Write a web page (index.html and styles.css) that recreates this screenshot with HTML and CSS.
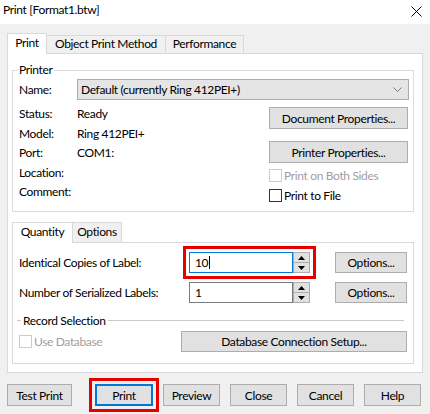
FILE: index.html
```html
<!DOCTYPE html>
<html lang="en">
<head>
<meta charset="utf-8">
<title>Print [Format1.btw]</title>
<link rel="stylesheet" href="styles.css">
</head>
<body>
<div class="window">
  <div class="titlebar">
    <span class="title">Print [Format1.btw]</span>
    <span class="close" aria-label="Close">
      <svg width="11" height="11" viewBox="0 0 11 11"><path d="M0.5 0.5 L10.5 10.5 M10.5 0.5 L0.5 10.5" stroke="#000" stroke-width="1" fill="none"/></svg>
    </span>
  </div>
  <div class="dialog">
    <div class="tabs">
      <div class="tab active tab-print">Print</div>
      <div class="tab tab-opm">Object Print Method</div>
      <div class="tab tab-perf">Performance</div>
    </div>
    <div class="panel">
      <fieldset class="group">
        <legend>Printer</legend>
        <div class="name-row">
          <span class="lbl">Name:</span>
          <div class="combo">
            <span>Default (currently Ring 412PEI+)</span>
            <svg width="9" height="5" viewBox="0 0 9 5"><path d="M0.5 0.5 L4.5 4.5 L8.5 0.5" stroke="#777" stroke-width="1" fill="none"/></svg>
          </div>
        </div>
        <div class="printer-body">
          <div class="info">
            <span>Status:</span><span>Ready</span>
            <span>Model:</span><span>Ring 412PEI+</span>
            <span>Port:</span><span>COM1:</span>
            <span>Location:</span><span></span>
            <span>Comment:</span><span></span>
          </div>
          <div class="actions">
            <button class="btn">Document Properties...</button>
            <button class="btn">Printer Properties...</button>
            <label class="check disabled first"><span class="box"></span>Print on Both Sides</label>
            <label class="check"><span class="box"></span>Print to File</label>
          </div>
        </div>
      </fieldset>

      <div class="subtabs">
        <div class="tab active tab-qty">Quantity</div>
        <div class="tab tab-opt">Options</div>
      </div>
      <div class="subpanel">
        <div class="qgrid">
          <span class="qlbl">Identical Copies of Label:</span>
          <div class="spin highlight">
            <div class="field focused">10<span class="caret"></span></div>
            <div class="spinbtns">
              <span class="sb"><svg width="7" height="4" viewBox="0 0 7 4"><path d="M0 4 L3.5 0 L7 4 Z" fill="#000"/></svg></span>
              <span class="sb"><svg width="7" height="4" viewBox="0 0 7 4"><path d="M0 0 L3.5 4 L7 0 Z" fill="#000"/></svg></span>
            </div>
          </div>
          <button class="btn opt">Options...</button>

          <span class="qlbl">Number of Serialized Labels:</span>
          <div class="spin">
            <div class="field">1</div>
            <div class="spinbtns">
              <span class="sb"><svg width="7" height="4" viewBox="0 0 7 4"><path d="M0 4 L3.5 0 L7 4 Z" fill="#000"/></svg></span>
              <span class="sb"><svg width="7" height="4" viewBox="0 0 7 4"><path d="M0 0 L3.5 4 L7 0 Z" fill="#000"/></svg></span>
            </div>
          </div>
          <button class="btn opt">Options...</button>
        </div>
        <div class="record">
          <span class="rule short"></span>
          <span class="record-title">Record Selection</span>
          <span class="rule long"></span>
        </div>
        <div class="db-row">
          <label class="check disabled"><span class="box"></span>Use Database</label>
          <button class="btn db">Database Connection Setup...</button>
        </div>
      </div>
    </div>

    <div class="buttons">
      <button class="btn bb test">Test Print</button>
      <button class="btn bb default highlight">Print</button>
      <button class="btn bb">Preview</button>
      <button class="btn bb">Close</button>
      <button class="btn bb">Cancel</button>
      <button class="btn bb">Help</button>
    </div>
  </div>
</div>
</body>
</html>
```
FILE: styles.css
```css
* { box-sizing: border-box; }
html, body { margin: 0; padding: 0; }
body {
  width: 430px;
  height: 414px;
  overflow: hidden;
  background: #f0f0f0;
  font-family: Lato, "Noto Sans", sans-serif;
  font-size: 12px;
  letter-spacing: -0.35px;
  color: #000;
}

.titlebar {
  height: 24px;
  background: #fff;
  display: flex;
  justify-content: space-between;
  align-items: flex-start;
}
.title { padding: 2px 0 0 3px; line-height: 16px; }
.close { display: flex; margin: 6px 8px 0 0; }

.dialog { padding: 9px 7px 0 7px; }

.tabs, .subtabs {
  display: flex;
  align-items: flex-end;
  position: relative;
  z-index: 1;
}
.tabs { height: 20px; }
.tab {
  height: 18px;
  line-height: 15px;
  border: 1px solid #d9d9d9;
  border-bottom: none;
  background: #f0f0f0;
  text-align: center;
  margin-left: -1px;
}
.tab.active {
  height: 21px;
  margin-bottom: -1px;
  padding-top: 1px;
  line-height: 16px;
  background: #fff;
  position: relative;
  z-index: 2;
  margin-left: 0;
}
.tab-print { width: 40px; }
.tab-opm { width: 120px; }
.tab-perf { width: 79px; }

.panel {
  width: 416px;
  height: 320px;
  border: 1px solid #d9d9d9;
  background: #fff;
  padding: 8px 8px 0 4px;
}

.group {
  margin: 0;
  padding: 1px 4px 0 6px;
  border: 1px solid #dcdcdc;
  height: 150px;
  min-width: 0;
}
.group legend {
  padding: 0 2px;
  margin-left: -2px;
  line-height: 16px;
}

.name-row { display: flex; height: 21px; }
.lbl { width: 58px; line-height: 21px; }
.combo {
  width: 332px;
  height: 21px;
  background: #e5e5e5;
  border: 1px solid #acacac;
  display: flex;
  align-items: center;
  justify-content: space-between;
  padding: 0 6px 0 3px;
}

.printer-body {
  display: flex;
  justify-content: space-between;
  margin-top: 4px;
}
.info {
  display: grid;
  grid-template-columns: 58px auto;
  grid-auto-rows: 19.5px;
  line-height: 19.5px;
  align-content: start;
}
.actions {
  width: 139px;
  margin-right: 1px;
  padding-top: 3px;
  display: flex;
  flex-direction: column;
}
.btn {
  height: 22px;
  border: 1px solid #adadad;
  background: #e1e1e1;
  font: inherit;
  letter-spacing: inherit;
  color: #000;
  padding: 0;
  margin: 0;
}
.actions .btn + .btn { margin-top: 12px; }

.check {
  display: flex;
  align-items: center;
  height: 20px;
  gap: 2px;
}
.check.first { margin-top: 2px; }
.check .box {
  width: 13px;
  height: 13px;
  border: 1px solid #333;
  background: #fff;
}
.check.disabled { color: #a0a0a0; }
.check.disabled .box { border-color: #cccccc; }

.subtabs { height: 22px; margin-top: 8px; }
.tab-qty { width: 61px; height: 23px; padding-top: 2px; }
.tab-opt { width: 50px; height: 20px; line-height: 18px; }

.subpanel {
  width: 402px;
  height: 122px;
  border: 1px solid #d9d9d9;
  background: #fff;
  padding: 9px 6px 0 6px;
}
.qgrid {
  display: grid;
  grid-template-columns: 170px 121px 1fr;
  grid-auto-rows: 21px;
  row-gap: 9px;
  align-items: center;
}
.qlbl { line-height: 21px; }
.btn.opt { width: 72px; height: 21px; justify-self: end; }

.spin { display: flex; height: 21px; }
.spin.highlight { outline: 3px solid #e60000; outline-offset: 3px; }
.field {
  flex: 1;
  border: 1px solid #7a7a7a;
  background: #fff;
  padding-left: 5px;
  display: flex;
  align-items: center;
}
.field.focused { border-color: #0078d7; }
.caret {
  width: 1px;
  height: 13px;
  background: #000;
  margin-left: 1px;
}
.spinbtns { width: 17px; display: flex; flex-direction: column; }
.sb {
  flex: 1;
  border: 1px solid #adadad;
  background: #e1e1e1;
  display: flex;
  align-items: center;
  justify-content: center;
}
.sb + .sb { border-top: none; }

.record {
  display: flex;
  align-items: center;
  height: 16px;
  margin-top: 9px;
}
.rule { height: 1px; background: #c8c8c8; }
.rule.short { width: 4px; margin-left: -2px; }
.rule.long { flex: 1; margin-right: 3px; }
.record-title { padding: 0 2px; }

.db-row {
  display: flex;
  justify-content: space-between;
  align-items: center;
  margin-top: 3px;
  height: 21px;
}
.btn.db { width: 226px; height: 21px; }

.buttons {
  display: flex;
  gap: 10px;
  margin-top: 11px;
}
.btn.bb { width: 57px; }
.btn.test { width: 65px; margin-right: 13px; }
.btn.default {
  width: 58px;
  border: 2px solid #0078d7;
  outline: 3px solid #e60000;
  outline-offset: 3px;
}
```
